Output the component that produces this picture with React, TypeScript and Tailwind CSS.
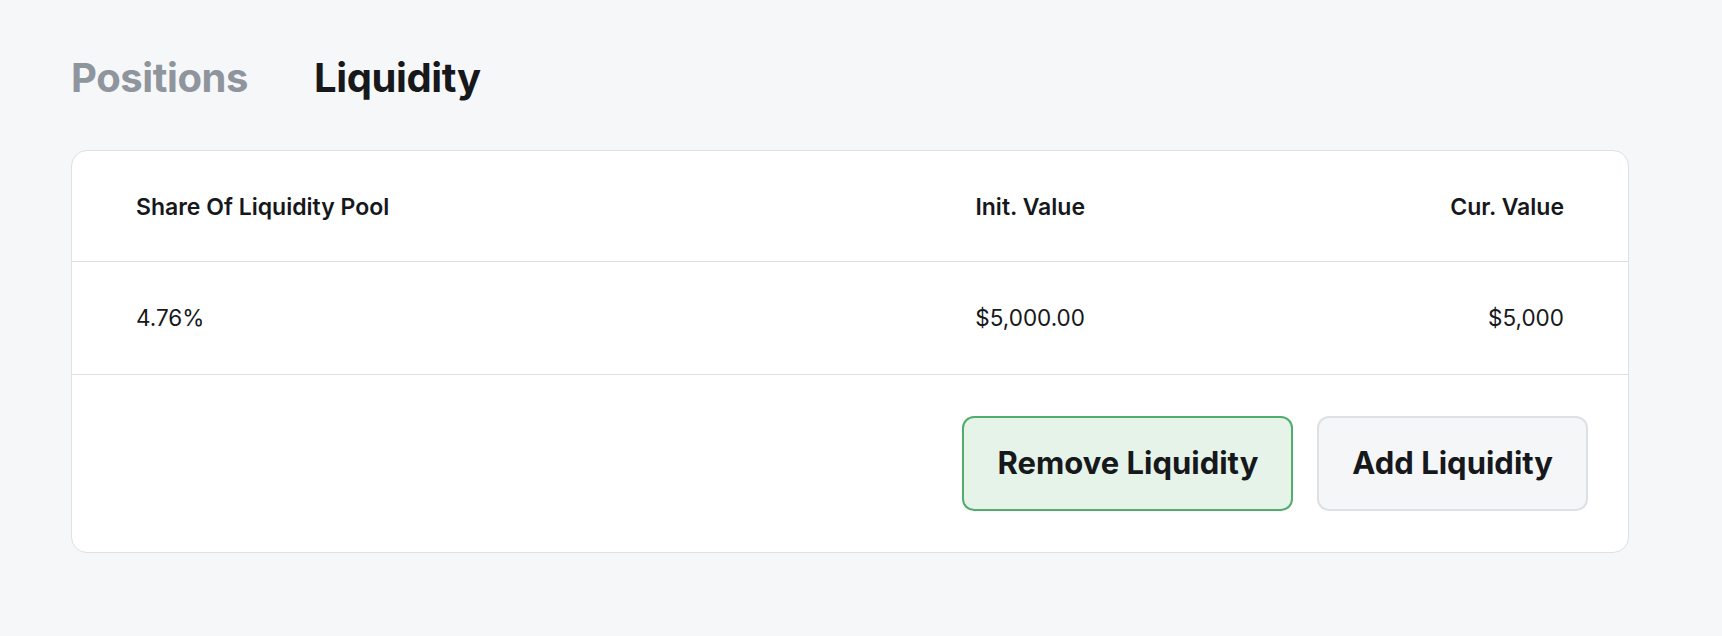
import React from "react";

export default function App() {
  return (
    <div
      className="min-h-[636px] w-full bg-[#f6f7f9] text-[#16181b]"
      style={{ fontFamily: "Inter, 'Noto Sans', sans-serif" }}
    >
      <div className="ml-[71px] w-[1558px] pt-[54px]">
        <div className="flex items-center gap-[66px] text-[40px] font-bold leading-[48px] tracking-[-0.01em]">
          <button className="text-[#8e959c]">Positions</button>
          <button className="text-[#16181b]">Liquidity</button>
        </div>

        <div className="mt-[48px] overflow-hidden rounded-2xl border border-[#dde1e6] bg-white">
          <div className="flex h-[111px] items-center border-b border-[#dde1e6] px-16 pt-[2px] text-[23px] font-semibold">
            <div className="flex-1">Share Of Liquidity Pool</div>
            <div className="text-right">Init. Value</div>
            <div className="w-[479px] text-right">Cur. Value</div>
          </div>
          <div className="flex h-[113px] items-center border-b border-[#dde1e6] px-16 text-[22.5px] font-normal">
            <div className="flex-1">4.76%</div>
            <div className="text-right">$5,000.00</div>
            <div className="w-[479px] text-right">$5,000</div>
          </div>
          <div className="flex justify-end gap-6 px-10 py-[41px]">
            <button className="flex h-[95px] items-center rounded-xl border-2 border-[#52ad6c] bg-[#e5f3e9] px-[33px] text-[31px] font-bold">
              Remove Liquidity
            </button>
            <button className="flex h-[95px] items-center rounded-xl border-2 border-[#dde1e6] bg-[#f5f6f8] px-[33px] text-[31px] font-bold">
              Add Liquidity
            </button>
          </div>
        </div>
      </div>
    </div>
  );
}
